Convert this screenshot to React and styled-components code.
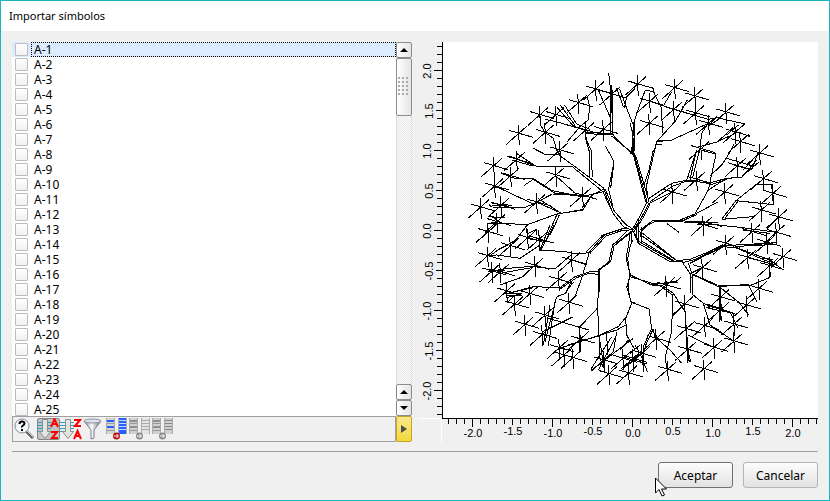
import styled, { createGlobalStyle, css } from "styled-components";
import { useState } from "react";

const SYMBOLS = Array.from({ length: 25 }, (_, i) => `A-${i + 1}`);

// star centres and branches, three units to a pixel: four quadrants, then the root
const TREE = [
  {
    x: 66,
    y: 84,
    stars: [
      [391, 57], [339, 98], [440, 72], [224, 134], [272, 134], [160, 190],
      [240, 187], [361, 180], [414, 178], [284, 240], [154, 268], [85, 287],
      [136, 317], [272, 315], [88, 348], [352, 376], [214, 396], [107, 406],
      [46, 411], [95, 455], [68, 485],
    ],
    branches: [
      "330,290 416,354",
      "324,292 410,362",
      "422,229 447,275 437,355",
      "447,275 431,355",
      "154,250 215,290 325,290",
      "133,258 210,288",
      "140,270 200,287",
      "108,310 150,325 205,326 262,362 350,380 416,365",
      "178,346 205,328 270,370 350,376",
      "88,350 105,355 205,402 262,372 350,377",
      "205,235 242,254 280,254 330,290",
      "224,134 228,168 240,187 265,205 275,240 284,254",
      "361,180 363,210 373,245 374,320",
      "364,210 378,240 382,320",
      "276,112 325,168 370,184",
      "285,104 330,166",
      "298,104 335,162 375,178",
      "240,148 270,154 365,182",
      "361,188 440,190 452,205 510,258",
      "361,191 440,194",
      "440,198 500,248",
      "431,10 437,60 444,180",
      "437,60 437,190",
      "444,60 442,190 452,208",
      "400,60 437,145",
      "365,75 374,110 370,150 345,170 306,216",
      "455,55 475,110",
      "464,57 485,115 505,165 500,250",
      "510,158 507,245",
      "391,57 478,82",
      "495,34 510,40",
      "510,55 485,80 478,115",
      "72,403 80,411 180,412 210,400",
      "80,408 120,406 150,418",
      "80,400 140,406",
      "214,396 290,430 355,418 380,376 416,357",
      "218,385 280,424",
      "350,415 385,372",
      "70,440 120,443",
      "75,436 110,460",
      "70,460 190,463 275,432 355,420",
      "78,457 130,462",
      "283,435 272,460 255,495",
      "275,435 262,465 248,495",
      "275,432 283,437",
      "272,317 340,378",
      "182,468 187,495",
      "187,492 215,478 216,495",
    ],
  },
  {
    x: 561,
    y: 84,
    stars: [
      [22, 42], [58, 94], [57, 160], [133, 53], [130, 118], [194, 78],
      [196, 129], [235, 160], [287, 126], [212, 236], [315, 186], [330, 215],
      [388, 249], [321, 287], [199, 328], [126, 366], [399, 326], [283, 366],
      [428, 370], [393, 420], [445, 441], [219, 464], [365, 485], [438, 487],
    ],
    branches: [
      "0,158 8,190 12,250 52,400",
      "10,155 8,245 47,395",
      "0,250 17,257 57,395",
      "42,345 57,300 70,240",
      "50,345 74,240 80,215 125,210 235,160",
      "74,225 95,222",
      "80,212 125,212",
      "46,60 20,130 13,155 8,195",
      "46,60 70,65 95,115 97,190",
      "68,52 75,75",
      "80,215 137,152 172,90",
      "100,108 125,65",
      "60,94 130,118 235,148 270,142",
      "235,135 238,165 262,140",
      "240,165 270,145 345,162 310,190",
      "57,385 125,340 172,330 235,340 290,325",
      "60,395 125,350 165,335 205,332",
      "57,400 125,366",
      "52,380 50,345",
      "170,330 200,240",
      "180,330 196,255",
      "187,325 210,236 215,190 235,160",
      "200,232 262,216 310,172",
      "260,216 325,186 360,200",
      "290,195 325,165",
      "212,240 258,252 235,360 195,432 145,452",
      "235,360 290,325 335,322 380,270",
      "240,345 290,328",
      "240,318 275,285 292,260 312,222",
      "290,265 365,287",
      "312,285 365,300 380,258",
      "335,320 388,275",
      "385,250 340,300",
      "68,452 145,452 265,458",
      "75,455 160,455",
      "145,452 200,430 265,395",
      "148,456 200,434",
      "160,456 230,458 260,465 330,472 440,487",
      "200,462 260,462 275,470",
      "275,448 318,392 430,404 425,344 378,344 318,392",
      "285,445 325,392",
      "275,448 370,440",
      "110,460 147,487",
      "410,478 445,440",
      "340,480 420,490",
    ],
  },
  {
    x: 66,
    y: 549,
    stars: [
      [69, 20], [187, 38], [222, 42], [135, 62], [67, 92], [209, 121],
      [319, 105], [80, 138], [105, 140], [280, 163], [124, 198], [194, 206],
      [148, 237], [311, 232], [239, 270], [179, 298], [231, 328], [345, 342],
      [282, 368], [296, 390], [323, 398], [473, 400], [431, 446], [490, 444],
      [416, 405], [503, 400],
    ],
    branches: [
      "437,110 402,135 398,250 405,400 415,430",
      "432,110 400,135",
      "403,135 404,200",
      "483,100 497,150 485,185 500,235 482,280 485,330 510,375",
      "488,100 494,150 489,185 497,232",
      "495,150 510,155",
      "498,232 510,232",
      "225,75 300,80 335,87 372,83",
      "255,0 225,75",
      "267,0 228,75",
      "372,85 350,160 330,215 311,232",
      "320,105 365,120",
      "68,92 95,90 165,100 222,62",
      "75,92 100,74 135,56 155,42 187,0",
      "183,40 262,52",
      "65,133 120,142 200,128",
      "80,138 130,130 200,124 270,132 320,88",
      "68,140 120,135",
      "105,180 175,155 209,121",
      "130,205 205,185 285,188 330,155 375,140 402,138",
      "285,192 335,158 372,145 400,148",
      "205,188 150,200",
      "120,205 170,205",
      "122,212 172,210",
      "125,218 165,207",
      "130,230 150,210",
      "275,215 302,205 318,172",
      "300,205 322,175 311,178",
      "275,215 240,350",
      "270,230 250,362",
      "255,240 235,360",
      "397,250 345,305 342,385",
      "250,280 372,315",
      "230,322 325,275",
      "285,370 345,350 455,315 482,300",
      "310,360 400,332 460,305 480,280",
      "300,365 275,375",
      "402,330 418,435",
      "455,320 445,380 405,420",
      "455,330 400,435",
      "425,325 428,390",
      "440,335 378,432",
      "505,340 380,435",
      "490,345 465,375",
    ],
  },
  {
    x: 561,
    y: 549,
    stars: [
      [286, 55], [410, 52], [352, 97], [216, 128], [418, 122], [458, 95],
      [386, 190], [108, 180], [271, 216], [163, 237], [349, 240], [271, 254],
      [223, 302], [311, 297], [168, 311], [78, 340], [251, 367], [311, 348],
      [172, 373], [112, 433], [221, 431], [35, 385], [8, 405],
    ],
    branches: [
      "140,107 180,103 225,85 280,58",
      "160,112 200,102 250,75 280,62 410,55",
      "180,115 225,92 280,65 310,68",
      "298,68 440,52",
      "370,62 442,58",
      "310,65 410,108 440,115",
      "320,68 420,105 460,135",
      "350,97 430,118",
      "390,100 430,103",
      "157,112 180,145 180,205",
      "175,115 187,150 187,208 220,235 240,300 280,330",
      "182,145 262,180 360,182 418,158 418,122",
      "190,150 265,185 358,178",
      "187,143 216,128",
      "0,150 65,180 140,168 152,157",
      "0,155 70,176 145,172",
      "65,178 130,173",
      "90,182 128,210 125,320 105,400 112,433",
      "65,180 95,180 130,205 165,260 173,415",
      "167,290 175,380 182,412",
      "172,370 178,410",
      "127,275 163,240",
      "0,230 57,252 65,310",
      "65,310 42,360 40,440",
      "68,315 45,365",
      "65,310 80,340 120,375 155,415",
      "70,312 75,340",
      "15,360 30,385 52,440",
      "0,385 30,360",
      "220,235 300,262 325,310",
      "230,242 300,260",
      "228,248 310,265",
      "235,238 290,258",
      "268,185 268,290",
      "272,187 270,290",
      "355,180 380,230",
      "270,187 330,235 355,270",
      "311,265 311,297",
      "173,330 250,367",
      "240,300 311,348",
    ],
  },
  {
    x: 351,
    y: 414,
    stars: [],
    branches: [
      "131,24 136,40 158,98 190,140 205,148",
      "136,28 162,92 195,132 220,148",
      "145,25 155,65 160,90 200,136",
      "128,34 155,92",
      "267,70 243,115 220,150",
      "262,65 238,112 216,150",
      "270,72 248,115 222,155",
      "278,122 240,150",
      "285,125 262,136 243,155",
      "228,132 228,172",
      "236,118 237,186",
      "243,140 243,190",
      "218,150 235,190 330,245 370,245",
      "224,160 236,184 338,243",
      "240,158 246,184 342,242",
      "243,156 350,242",
      "238,152 244,166 347,240",
      "218,150 195,144 133,165 85,220",
      "208,152 190,150 138,168 90,220",
      "200,142 128,165 78,217",
      "220,152 162,198 152,245",
      "205,150 158,195 147,245",
      "212,155 168,190",
      "210,160 205,200 198,235",
      "218,180 210,200 203,235",
      "214,152 214,190",
    ],
  },
];

// tenths of a unit from -2.3 to 2.3, eight pixels each
const TICKS = Array.from({ length: 47 }, (_, i) => i - 23);

const tickLength = (t) => (t % 10 === 0 ? 8 : t % 5 === 0 ? 6 : 5);
const tickLabel = (t) => (t / 10).toFixed(1);

function SymbolPlot() {
  return (
    <Plot viewBox="0 0 406 400" role="img" aria-label="Vista previa">
      <rect x="6" y="376" width="25" height="1" fill="#fff" />
      <rect x="29" y="376" width="1" height="24" fill="#fff" />
      <rect x="31" y="0" width="375" height="376" fill="#fff" />
      <g fill="#000">
        <rect x="30" y="0" width="1" height="377" />
        <rect x="30" y="376" width="376" height="1" />
        {TICKS.map((t) => (
          <g key={t}>
            <rect
              x={30 - tickLength(t)}
              y={188 - t * 8}
              width={tickLength(t)}
              height="1"
            />
            <rect
              x={220 + t * 8}
              y="377"
              width="1"
              height={tickLength(t)}
            />
          </g>
        ))}
      </g>
      {TICKS.filter((t) => t % 5 === 0).map((t) => {
        const shift = t % 10 === 0 ? 2 : 0;
        return (
          <g key={t}>
            <TickText x={221 + t * 8} y={393 + shift}>
              {tickLabel(t)}
            </TickText>
            <TickText
              transform={`translate(${21 - shift} ${189 - t * 8}) rotate(-90)`}
            >
              {tickLabel(t)}
            </TickText>
          </g>
        );
      })}
      <svg x="31" y="0" width="375" height="376" viewBox="0 0 1125 1128">
        <g
          fill="none"
          stroke="#000"
          strokeWidth="3"
          shapeRendering="crispEdges"
        >
          {TREE.map((part) => (
            <g
              key={`${part.x}-${part.y}`}
              transform={`translate(${part.x} ${part.y})`}
            >
              {part.stars.map(([x, y]) => (
                <path
                  key={`${x}-${y}`}
                  d={`M${x - 28},${y - 9} l72,21 M${x - 1},${y - 27} l4,62 M${x - 36},${y + 33} l62,-55`}
                />
              ))}
              {part.branches.map((points) => (
                <polyline key={points} points={points} />
              ))}
            </g>
          ))}
        </g>
      </svg>
    </Plot>
  );
}

function FindIcon() {
  return (
    <Icon viewBox="0 0 22 22">
      <path d="M12 13l7 7" stroke="#5c5c5c" strokeWidth="3" />
      <path d="M13 13l6 6" stroke="#ddd" strokeWidth="1" />
      <circle cx="8" cy="8" r="7" fill="#f4f7fb" stroke="#8a8f96" />
      <path
        d="M5.500 6q0-2.500 2.500-2.500t2.500 2q0 1-1.500 2t-1 2"
        fill="none"
        stroke="#000"
        strokeWidth="2"
      />
      <rect x="7" y="11" width="2" height="2" />
    </Icon>
  );
}

function SortIcon({ reverse }) {
  const top = reverse ? "M14 2h6l-5 6h6" : "M14 9l3.500-8 3.500 8M15 6h5";
  const bottom = reverse ? "M14 21l3.500-8 3.500 8M15 18h5" : "M14 14h6l-5 6h6";
  return (
    <Icon viewBox="0 0 22 22">
      <path
        d="M0 4.500h14M0 7.500h14M0 10.500h14M0 13.500h14"
        stroke="#2f9fc6"
      />
      <path
        d="M5.500 1.500h5v12h3l-5.500 7-5.500-7h3z"
        fill="#e3e6e0"
        stroke="#8c918b"
      />
      <path d={top} fill="none" stroke="#f00" strokeWidth="2" />
      <path d={bottom} fill="none" stroke="#f00" strokeWidth="2" />
    </Icon>
  );
}

function FilterIcon() {
  return (
    <Icon viewBox="0 0 22 22">
      <defs>
        <linearGradient id="steel">
          <stop offset="0" stopColor="#777b8c" />
          <stop offset="0.45" stopColor="#fff" />
          <stop offset="1" stopColor="#666b7c" />
        </linearGradient>
      </defs>
      <path
        d="M1 3l7 9v9l3-1v-8l7-9z"
        fill="url(#steel)"
        stroke="#7c8090"
        strokeWidth="1"
      />
      <ellipse
        cx="9.500"
        cy="3"
        rx="8.500"
        ry="2"
        fill="#dfe1ea"
        stroke="#8c90a0"
      />
    </Icon>
  );
}

function ColumnsIcon({ left, right, dot, fillLeft, fillRight }) {
  return (
    <Icon viewBox="0 0 22 22">
      <rect x="0" y="0" width="9" height="16" fill={fillLeft} />
      <rect x="12" y="0" width="9" height="16" fill={fillRight} />
      <path d="M1 3h7M1 9h7" stroke={left} strokeWidth="2" />
      <path d="M1 5.500h7M1 12.500h7" stroke="#999" />
      <path
        d="M13 2.500h7M13 5.500h7M13 8.500h7M13 11.500h7"
        stroke={right}
      />
      <path d="M.5 0v16M8.500 0v16M12.500 0v16M20.500 0v16" stroke="#aaa" />
      <circle cx="10.500" cy="18" r="3.500" fill={dot} />
      <path d="M8 18h4M10.500 16l2 2-2 2" stroke="#fff" fill="none" />
    </Icon>
  );
}

function Arrow({ d }) {
  return (
    <svg width="8" height="8" viewBox="0 0 8 8" aria-hidden="true">
      <path d={d} />
    </svg>
  );
}

export default function App() {
  const [checked, setChecked] = useState({});
  const [current, setCurrent] = useState("A-1");

  const toggle = (name) => {
    setCurrent(name);
    setChecked((prev) => ({ ...prev, [name]: !prev[name] }));
  };

  return (
    <>
      <GlobalStyle />
      <Dialog>
        <TitleBar>Importar símbolos</TitleBar>
        <Content>
          <ListPanel>
            <ListArea>
              <SymbolList>
                {SYMBOLS.map((name) => (
                  <SymbolRow key={name} $current={name === current}>
                    <CheckBox
                      type="checkbox"
                      id={name}
                      checked={!!checked[name]}
                      onChange={() => toggle(name)}
                    />
                    <SymbolName htmlFor={name} $current={name === current}>
                      {name}
                    </SymbolName>
                  </SymbolRow>
                ))}
              </SymbolList>
              <ScrollBar>
                <ScrollButton aria-label="Subir">
                  <Arrow d="M0 6l4-4 4 4z" />
                </ScrollButton>
                <ScrollThumb>
                  <Grip />
                </ScrollThumb>
                <ScrollTrack />
                <ScrollButton aria-label="Subir">
                  <Arrow d="M0 6l4-4 4 4z" />
                </ScrollButton>
                <ScrollButton aria-label="Bajar">
                  <Arrow d="M0 2l4 4 4-4z" />
                </ScrollButton>
              </ScrollBar>
            </ListArea>
            <ToolRow>
              <ToolBar>
                <ToolButton aria-label="Buscar">
                  <FindIcon />
                </ToolButton>
                <ToolButton aria-label="Orden ascendente" $pressed>
                  <SortIcon />
                </ToolButton>
                <ToolButton aria-label="Orden descendente">
                  <SortIcon reverse />
                </ToolButton>
                <ToolButton aria-label="Filtrar">
                  <FilterIcon />
                </ToolButton>
                <ToolButton aria-label="Marcar todos">
                  <ColumnsIcon
                    left="#2460ff"
                    right="#ccd9ff"
                    dot="#b80d0d"
                    fillLeft="#d4d4d4"
                    fillRight="#2460ff"
                  />
                </ToolButton>
                <ToolButton aria-label="Desmarcar todos">
                  <ColumnsIcon
                    left="#909090"
                    right="#aaa"
                    dot="#8a8a8a"
                    fillLeft="#d0d0d0"
                    fillRight="#e4e4e4"
                  />
                </ToolButton>
                <ToolButton aria-label="Invertir">
                  <ColumnsIcon
                    left="#909090"
                    right="#888"
                    dot="#8a8a8a"
                    fillLeft="#d0d0d0"
                    fillRight="#d0d0d0"
                  />
                </ToolButton>
              </ToolBar>
              <ExpandButton aria-label="Más">
                <Arrow d="M1 0l6 4-6 4z" />
              </ExpandButton>
            </ToolRow>
          </ListPanel>
          <SymbolPlot />
        </Content>
        <Footer>
          <ButtonHolder>
            <DialogButton $primary>Aceptar</DialogButton>
            <Pointer viewBox="0 0 12 20" aria-hidden="true">
              <path
                d="M.5 1v15l3.500-3.500 3 6.500 2.500-1-3-6h5z"
                fill="#fff"
                stroke="#000"
              />
            </Pointer>
          </ButtonHolder>
          <DialogButton>Cancelar</DialogButton>
        </Footer>
      </Dialog>
    </>
  );
}

const GlobalStyle = createGlobalStyle`
  * {
    box-sizing: border-box;
  }
  body {
    margin: 0;
    font-family: "Noto Sans", "Open Sans", sans-serif;
    font-size: 12px;
    color: #000;
  }
  button, input {
    font: inherit;
    margin: 0;
    padding: 0;
  }
`;

const Dialog = styled.main`
  display: flex;
  flex-direction: column;
  height: 100vh;
  border: 1px solid #1cb4c2;
  background-color: #f0f0f0;
`;

const TitleBar = styled.header`
  height: 30px;
  padding: 0 8px;
  font-size: 11px;
  line-height: 30px;
  background-color: white;
`;

const Content = styled.div`
  flex: 1;
  min-height: 0;
  display: grid;
  grid-template-columns: 400fr 406fr;
  grid-template-rows: minmax(0, 1fr);
  margin: 11px 11px 0;
  padding-bottom: 9px;
  border-bottom: 1px solid #a0a0a0;
`;

const ListPanel = styled.section`
  display: flex;
  flex-direction: column;
  min-height: 0;
`;

const ListArea = styled.div`
  flex: 1;
  min-height: 0;
  display: flex;
`;

const SymbolList = styled.ul`
  flex: 1;
  margin: 0;
  padding: 0;
  list-style: none;
  overflow: hidden;
  background-color: white;
`;

const SymbolRow = styled.li`
  display: flex;
  align-items: center;
  gap: 3px;
  height: 15px;
  padding-left: 3px;
  background-color: ${(props) => (props.$current ? "#dcebfd" : "white")};
`;

const CheckBox = styled.input`
  appearance: none;
  width: 13px;
  height: 13px;
  border: 1px solid #bcbcbc;
  border-radius: 1px;
  background: linear-gradient(#fff, #f1f1f1);
  &:checked {
    background: #6b8fc0;
  }
`;

const SymbolName = styled.label`
  flex: 1;
  height: 15px;
  padding-left: 2px;
  line-height: 13px;
  border: 1px dotted ${(props) => (props.$current ? "#000" : "transparent")};
`;

const ScrollBar = styled.div`
  width: 16px;
  display: flex;
  flex-direction: column;
`;

const raised = css`
  border: 1px solid #8c8c8c;
  border-radius: 2px;
  background: linear-gradient(90deg, #fff, #e4e4e4);
`;

const ScrollButton = styled.button`
  ${raised}
  height: 16px;
  display: flex;
  align-items: center;
  justify-content: center;
`;

const ScrollThumb = styled.div`
  ${raised}
  height: 58px;
  display: flex;
  align-items: center;
  justify-content: center;
`;

const Grip = styled.div`
  width: 12px;
  height: 20px;
  background: radial-gradient(circle at 1px 1px, #aaa 1px, transparent 1px);
  background-size: 4px 4px;
`;

const ScrollTrack = styled.div`
  flex: 1;
  border: 1px dotted #d0d0d0;
  border-width: 0 1px;
  background: repeating-conic-gradient(#e9e9e9 0 25%, #fafafa 0 50%);
  background-size: 2px 2px;
`;

const ToolRow = styled.div`
  display: flex;
  height: 26px;
`;

const ToolBar = styled.div`
  flex: 1;
  display: flex;
  align-items: center;
  padding-left: 1px;
  border: 1px solid #a0a0a0;
`;

const ToolButton = styled.button`
  width: 23px;
  height: 22px;
  display: flex;
  align-items: center;
  border: none;
  border-radius: 3px;
  background: ${(props) => (props.$pressed ? "#c4c4c4" : "none")};
  box-shadow: ${(props) =>
    props.$pressed ? "inset 0 0 0 1px #858585" : "none"};
`;

const ExpandButton = styled.button`
  width: 16px;
  display: flex;
  align-items: center;
  justify-content: center;
  border: 1px solid #c3a52c;
  border-radius: 2px;
  background: linear-gradient(#f9e88c, #f5d93c);
  fill: #4d4d4d;
`;

const Icon = styled.svg`
  width: 22px;
  height: 22px;
`;

const Plot = styled.svg`
  width: 100%;
  height: 100%;
`;

const TickText = styled.text`
  font-family: "Liberation Sans", Arial, sans-serif;
  font-size: 11px;
  text-anchor: middle;
`;

const Footer = styled.footer`
  display: flex;
  justify-content: flex-end;
  gap: 10px;
  padding: 10px 11px 12px;
`;

const ButtonHolder = styled.div`
  position: relative;
`;

const DialogButton = styled.button`
  width: 75px;
  height: 26px;
  border: 1px solid ${(props) => (props.$primary ? "#707070" : "#b4b4b4")};
  border-radius: 3px;
  background: linear-gradient(#fdfdfd, #e2e2e2);
`;

const Pointer = styled.svg`
  position: absolute;
  top: 15px;
  left: -3px;
  width: 12px;
  height: 20px;
`;
